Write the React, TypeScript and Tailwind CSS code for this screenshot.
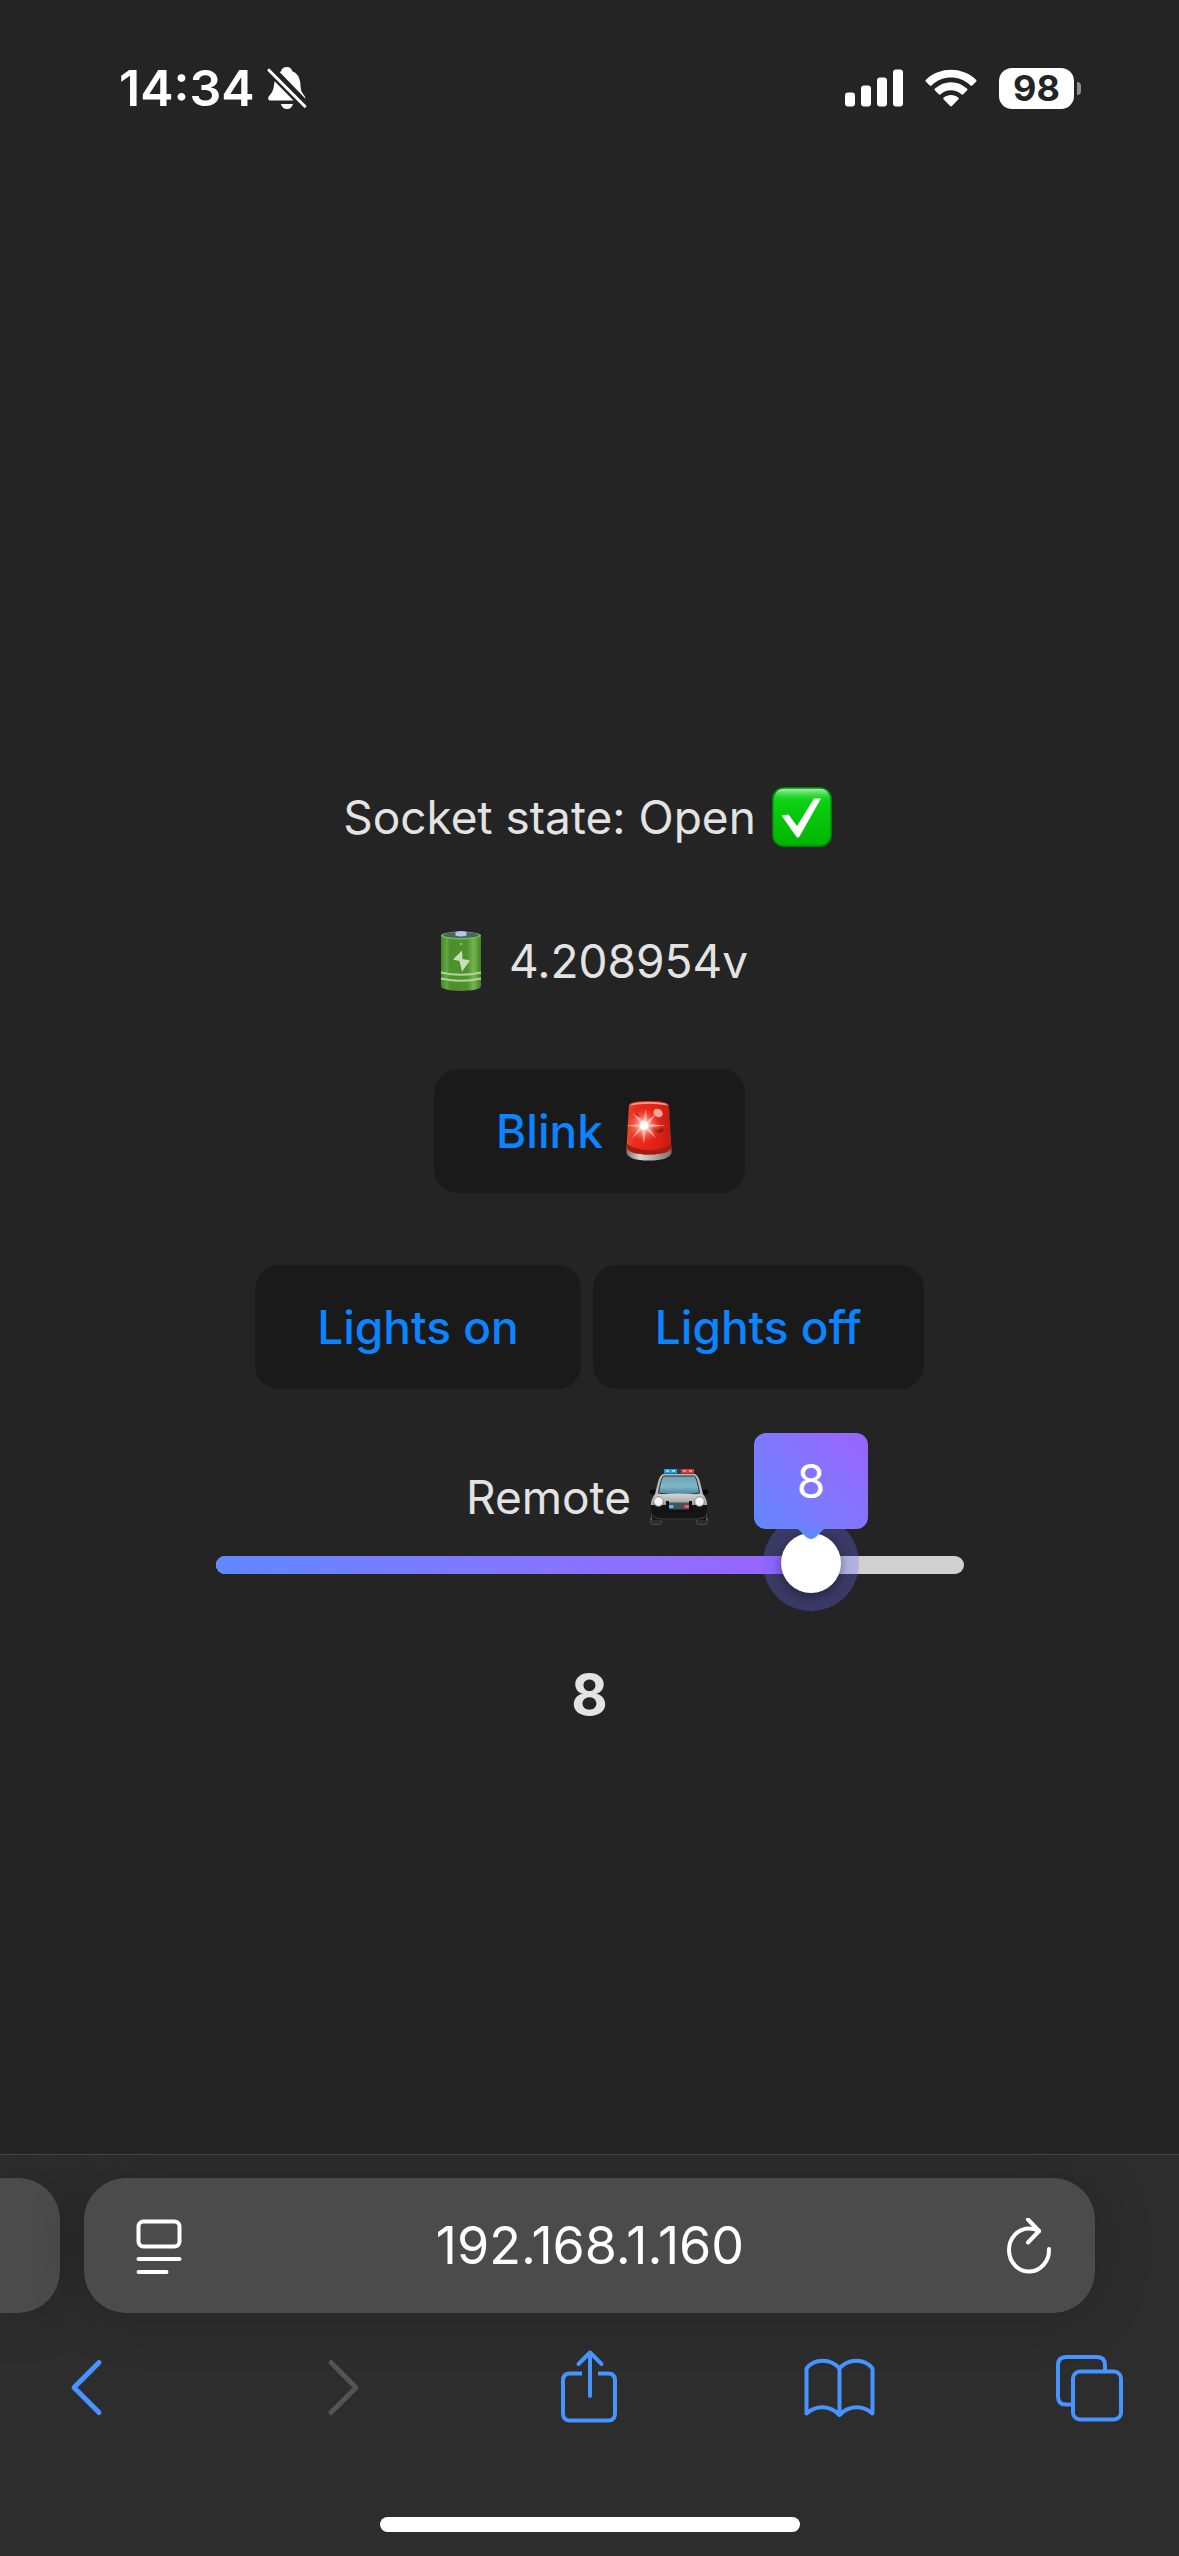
import { useState } from "react";

function BellOff() {
  return (
    <svg className="h-[44px] w-[40px]" viewBox="0 0 40 44" aria-label="Silent mode" role="img">
      <g fill="#fff">
        <path d="M20 1C16.500 1 14.600 3 14.100 5.200L12.600 6L38.500 32.800C38.600 29.500 34.500 28 33.800 22.500L33.200 16.500C32.600 10.500 29.500 6.800 25.300 5.200C24.700 2.900 23 1 20 1Z" />
        <path d="M7.600 15.200L26.500 34.600H3.500C1.200 34.600 0.500 31.900 1.900 30.200C4.200 27.500 6.100 25.300 6.700 21Z" />
        <path d="M13.800 38H26C25.200 41 23 43 20 43C17 43 14.600 41 13.800 38Z" />
      </g>
      <path d="M2 4.200L37.800 40.300" stroke="#fff" strokeWidth="3" strokeLinecap="round" />
    </svg>
  );
}

function Signal() {
  return (
    <svg className="h-[38px] w-[58px]" viewBox="0 0 58 38" fill="#fff" aria-label="Signal" role="img">
      <rect x="0" y="23.500" width="10" height="14" rx="3" />
      <rect x="16" y="16.500" width="10" height="21" rx="3" />
      <rect x="32" y="8.500" width="10" height="29" rx="3" />
      <rect x="48" y="0.500" width="10" height="37" rx="3" />
    </svg>
  );
}

function Wifi() {
  return (
    <svg className="h-[38px] w-[52px]" viewBox="0 0 52 38" fill="#fff" aria-label="Wi-Fi" role="img">
      <path d="M1 10.700Q0 11.700 1 12.700L4.700 16.400Q5.600 17.200 6.500 16.400C17.500 6 34.500 6 45.500 16.400Q46.400 17.200 47.300 16.400L51 12.700Q52 11.700 51 10.700C37 -2.500 15 -2.500 1 10.700Z" />
      <path d="M10 19.600Q9 20.600 10 21.600L13.800 25.300Q14.700 26.200 15.600 25.300C21.600 19.900 30.400 19.900 36.400 25.300Q37.300 26.200 38.200 25.300L42 21.600Q43 20.600 42 19.600C33 11 19 11 10 19.600Z" />
      <path d="M18.700 28.500Q17.700 29.600 18.700 30.600L25.100 37Q26 37.900 26.900 37L33.300 30.600Q34.300 29.600 33.300 28.500C29.100 25.100 22.900 25.100 18.700 28.500Z" />
    </svg>
  );
}

function CheckMark() {
  return (
    <svg className="h-[60px] w-[60px]" viewBox="0 0 60 60" role="img" aria-label="Check mark">
      <defs>
        <linearGradient id="check-face" x1="0" y1="0" x2="0" y2="1">
          <stop offset="0" stopColor="#3fd84a" />
          <stop offset="0.250" stopColor="#0bcf12" />
          <stop offset="1" stopColor="#00b400" />
        </linearGradient>
        <linearGradient id="check-gloss" x1="0" y1="0" x2="0" y2="1">
          <stop offset="0" stopColor="#a8f5ad" stopOpacity="0.900" />
          <stop offset="1" stopColor="#30d838" stopOpacity="0" />
        </linearGradient>
      </defs>
      <rect width="60" height="60" rx="12" fill="#04800a" />
      <rect x="1.500" y="1.500" width="57" height="57" rx="11" fill="url(#check-face)" />
      <rect x="4" y="2" width="52" height="10" rx="7" fill="url(#check-gloss)" />
      <path d="M9.500 28.500L16.500 27.500L25 39L42 11.500H49L27.500 49.500Q25.500 52 23.800 49Z" fill="#fff" />
    </svg>
  );
}

function BatteryCell() {
  return (
    <svg className="h-[60px] w-[60px]" viewBox="0 0 60 60" role="img" aria-label="Battery">
      <defs>
        <linearGradient id="cell-body" x1="0" x2="1">
          <stop offset="0" stopColor="#3f8a22" />
          <stop offset="0.150" stopColor="#67a545" />
          <stop offset="0.220" stopColor="#4d8f2c" />
          <stop offset="0.650" stopColor="#4e922d" />
          <stop offset="0.820" stopColor="#79b352" />
          <stop offset="1" stopColor="#3c8521" />
        </linearGradient>
      </defs>
      <path d="M10 4V55C10 61.500 50 61.500 50 55V4Z" fill="url(#cell-body)" />
      <ellipse cx="30" cy="4.500" rx="20" ry="4" fill="#60c060" />
      <ellipse cx="30" cy="4" rx="18" ry="3" fill="#53605f" />
      <path d="M24.500 1Q30 -1 35.500 1V4.500Q30 6.500 24.500 4.500Z" fill="#b1c7ec" />
      <path d="M10 41.500Q30 46 50 41.500M10 47.500Q30 52 50 47.500" fill="none" stroke="#b2d49b" strokeWidth="2" />
      <path d="M31 19.500L22 28.500L28.500 30L31 40.500L39 29.500L31.500 28Z" fill="#c9dfb8" />
      <circle cx="30" cy="13" r="1.200" fill="#86bd68" />
    </svg>
  );
}

function Siren() {
  return (
    <svg className="h-[60px] w-[68px]" viewBox="0 0 60 60" role="img" aria-label="Siren">
      <defs>
        <linearGradient id="siren-base" x1="0" x2="1">
          <stop offset="0" stopColor="#777572" />
          <stop offset="0.300" stopColor="#d8d5d0" />
          <stop offset="0.650" stopColor="#aaa7a3" />
          <stop offset="1" stopColor="#77726f" />
        </linearGradient>
        <linearGradient id="siren-dome" x1="0" x2="1">
          <stop offset="0" stopColor="#e44b36" />
          <stop offset="0.200" stopColor="#f02b1a" />
          <stop offset="0.750" stopColor="#dc2015" />
          <stop offset="1" stopColor="#b91e16" />
        </linearGradient>
        <radialGradient id="siren-glow">
          <stop offset="0" stopColor="#fff" />
          <stop offset="0.350" stopColor="#ffb2a4" stopOpacity="0.750" />
          <stop offset="1" stopColor="#ff5540" stopOpacity="0" />
        </radialGradient>
      </defs>
      <path d="M7.500 46V52Q10 59.500 30 59.500Q50 59.500 52.500 52V46Z" fill="url(#siren-base)" />
      <path d="M10 4Q12 0 30 0Q48 0 50 4L52.500 47Q49 53.500 30 53.500Q11 53.500 7.500 47Z" fill="url(#siren-dome)" />
      <path d="M8 43Q18 49 30 49Q44 49 52 43L52.500 47Q49 53.500 30 53.500Q11 53.500 7.500 47Z" fill="#a51c12" />
      <path d="M11 4.500Q13 1 30 1Q47 1 49 4.500Q40 2.800 30 2.800Q20 2.800 11 4.500Z" fill="#f4a18f" />
      <ellipse cx="39" cy="12" rx="5" ry="4" fill="#f5a69c" transform="rotate(35 39 12)" />
      <path d="M34 27Q40 33 44 28M17 13L20 16" stroke="#8f1c15" strokeWidth="3" fill="none" />
      <circle cx="25" cy="24.500" r="17" fill="url(#siren-glow)" />
      <path d="M7 24.500L21.500 23L14 12L24 20L27 8L28 20L37 13L30 23L47 24.500L30 26.500L37 37L27 29L25 43L22.500 29L13 37L20.500 26.500Z" fill="#ffd4c8" opacity="0.650" />
      <circle cx="25" cy="24.500" r="4.500" fill="#fff" />
    </svg>
  );
}

function PoliceCar() {
  return (
    <svg className="h-[60px] w-[60px]" viewBox="0 0 60 60" role="img" aria-label="Police car">
      <defs>
        <linearGradient id="car-glass" x1="0" y1="0" x2="0" y2="1">
          <stop offset="0" stopColor="#6fa3b1" />
          <stop offset="0.550" stopColor="#7db8cb" />
          <stop offset="1" stopColor="#477d92" />
        </linearGradient>
        <linearGradient id="car-hood" x1="0" y1="0" x2="0" y2="1">
          <stop offset="0" stopColor="#d6d6d6" />
          <stop offset="1" stopColor="#929292" />
        </linearGradient>
      </defs>
      <rect x="1.500" y="50" width="11" height="7.500" rx="2" fill="#2d2d2d" stroke="#484848" />
      <rect x="47.500" y="50" width="11" height="7.500" rx="2" fill="#2d2d2d" stroke="#484848" />
      <ellipse cx="4" cy="25" rx="3.500" ry="2.500" fill="#080808" />
      <ellipse cx="56" cy="25" rx="3.500" ry="2.500" fill="#080808" />
      <path d="M14 7H46Q49 8 51 15L54 27Q59 33 58 42V53H2V42Q1 33 6 27L9 15Q11 8 14 7Z" fill="#b9b9b9" />
      <path d="M14.500 9H45.500Q48 11 50.500 26Q30 30 9.500 26Q12 11 14.500 9Z" fill="url(#car-glass)" stroke="#263238" />
      <path d="M7 28Q30 25 53 28Q58 34 57 40H3Q2 34 7 28Z" fill="url(#car-hood)" />
      <path d="M1.500 38H58.500L57.500 53H2.500Z" fill="#151515" />
      <path d="M2 46Q3 51.500 12 52H48Q57 51.500 58 46" fill="none" stroke="#424242" />
      <circle cx="9.500" cy="34.500" r="4.800" fill="#f4f4f4" stroke="#888" />
      <circle cx="50.500" cy="34.500" r="4.800" fill="#f4f4f4" stroke="#888" />
      <path d="M17 34H20V42H40V34H43V45H17Z" fill="#111" />
      <rect x="20" y="35.500" width="20" height="7" fill="#4b5055" />
      <rect x="20" y="38" width="4.500" height="3" rx="1" fill="#4ec3ff" />
      <rect x="35.500" y="38" width="4.500" height="3" rx="1" fill="#ff5656" />
      <rect x="14.500" y="2" width="31" height="5" rx="1.500" fill="#263e49" />
      <path d="M15 2H28V6.500H15Z" fill="#2b9dd7" />
      <path d="M32 2H45V6.500H32Z" fill="#dd3c3c" />
      <path d="M17 4H20M23 4H26" stroke="#85dcff" strokeWidth="2" />
      <path d="M34 4H37M40 4H43" stroke="#ff8989" strokeWidth="2" />
    </svg>
  );
}

function PageMenuIcon() {
  return (
    <svg className="h-[56px] w-[46px]" viewBox="0 0 46 56" fill="none" stroke="#fff" strokeWidth="4" strokeLinecap="round">
      <rect x="2.500" y="3.500" width="41" height="25" rx="5" />
      <path d="M2.500 41H43.500M2.500 54H30.500" />
    </svg>
  );
}

function ReloadIcon() {
  return (
    <svg className="h-[56px] w-[46px]" viewBox="0 0 46 56" fill="none" stroke="#fff" strokeWidth="4" strokeLinecap="round" strokeLinejoin="round">
      <path d="M43 31A20 21.500 0 1 1 23 10.500C27 10.500 30 11.500 33 13" />
      <path d="M22 1.500L33 13L22 24.500" />
    </svg>
  );
}

const lineIcon = "h-[76px] w-[68px] overflow-visible";

function BackIcon() {
  return (
    <svg className={lineIcon} viewBox="0 0 68 76" fill="none" stroke="currentColor" strokeWidth="5" strokeLinecap="round" strokeLinejoin="round">
      <path d="M47 11.500L22 36.500L47 61.500" />
    </svg>
  );
}

function ForwardIcon() {
  return (
    <svg className={lineIcon} viewBox="0 0 68 76" fill="none" stroke="currentColor" strokeWidth="5" strokeLinecap="round" strokeLinejoin="round">
      <path d="M28 11.500L53 36.500L28 61.500" />
    </svg>
  );
}

function ShareIcon() {
  return (
    <svg className={lineIcon} viewBox="0 0 68 76" fill="none" stroke="currentColor" strokeWidth="4" strokeLinejoin="round">
      <path d="M28 22.500H16Q9 22.500 9 29.500V62.500Q9 69.500 16 69.500H54Q61 69.500 61 62.500V29.500Q61 22.500 54 22.500H44" />
      <path d="M36 45V1.500M24.500 13L36 1.500L47.500 13" strokeLinecap="round" />
    </svg>
  );
}

function BookIcon() {
  return (
    <svg className={lineIcon} viewBox="0 0 68 76" fill="none" stroke="currentColor" strokeWidth="4" strokeLinecap="round" strokeLinejoin="round">
      <path d="M35.500 17.500C27 7 10 7 2.500 17.500V62.500C12 54 26 54 35.500 64C45 54 59 54 68.500 62.500V17.500C61 7 44 7 35.500 17.500V64" />
    </svg>
  );
}

function TabsIcon() {
  return (
    <svg className={lineIcon} viewBox="0 0 68 76" fill="none" stroke="currentColor" strokeWidth="4">
      <rect x="18" y="20.500" width="48" height="48" rx="7" />
      <path d="M17 53.500H11Q3 53.500 3 45.500V14Q3 6 11 6H42Q50 6 50 14V20" />
    </svg>
  );
}

const actionButton =
  "flex h-[124px] items-center rounded-[24px] bg-[#1a1a1a] px-[62px] font-medium text-[#0a84ff]";

function SpeedSlider({ value, onChange }: { value: number; onChange: (v: number) => void }) {
  const position = `calc(${value * 10}% - 3px)`;
  return (
    <div className="relative flex h-[60px] w-[748px] max-w-full items-center">
      <div className="mt-1 h-[18px] w-full overflow-hidden rounded-full bg-[#d0d0d0]">
        <div
          className="h-full bg-linear-45 from-[#5f88ff] to-[#9b61ff]"
          style={{ width: position }}
        />
      </div>
      <div
        className="pointer-events-none absolute top-1/2 size-[96px] -translate-x-1/2 -translate-y-1/2 rounded-full bg-[#6e6eff]/30"
        style={{ left: position }}
      />
      <div
        className="pointer-events-none absolute top-1/2 size-[60px] -translate-x-1/2 -translate-y-1/2 rounded-full bg-white shadow-[0_3px_12px_rgba(0,0,0,0.4)]"
        style={{ left: position }}
      />
      <output
        htmlFor="remote-speed"
        className="pointer-events-none absolute bottom-[64px] flex h-[96px] w-[114px] -translate-x-1/2 items-center justify-center rounded-[12px] bg-linear-45 from-[#5f88ff] to-[#9b61ff] text-[46px] leading-[72px] text-white"
        style={{ left: position }}
      >
        {value}
        <svg className="absolute top-full left-1/2 h-[10px] w-[26px] -translate-x-1/2" viewBox="0 0 26 10" fill="#5f88ff">
          <path d="M0 0H26L18 8Q13 12 8 8Z" />
        </svg>
      </output>
      <input
        id="remote-speed"
        type="range"
        min={0}
        max={10}
        value={value}
        onChange={(e) => onChange(Number(e.target.value))}
        className="absolute inset-0 h-full w-full cursor-pointer opacity-0"
      />
    </div>
  );
}

export default function App() {
  const [speed, setSpeed] = useState(8);

  return (
    <div className="flex min-h-screen flex-col bg-[#242424] font-['Inter',sans-serif] text-[46px] leading-[72px] text-[#e3e3e3]">
      <header className="flex h-[144px] items-center justify-between pt-[32px] pr-[98px] pl-[119px] text-white">
        <div className="flex items-center gap-[12px]">
          <time className="text-[50px] font-semibold">14:34</time>
          <BellOff />
        </div>
        <div className="flex items-center gap-[22px]">
          <Signal />
          <Wifi />
          <div className="flex items-center gap-[3px]">
            <div className="flex h-[41px] w-[75px] items-center justify-center rounded-[13px] bg-white text-[36px] font-bold text-[#242424]">
              98
            </div>
            <div className="h-[13px] w-[4px] rounded-r-full bg-[#8e8e8e]" />
          </div>
        </div>
      </header>

      <main className="flex flex-1 flex-col items-center justify-center pt-[220px]">
        <p className="flex items-center gap-[16px] pr-1">
          Socket state: Open <CheckMark />
        </p>
        <p className="mt-[72px] flex items-center gap-[18px]">
          <BatteryCell /> 4.208954v
        </p>
        <button type="button" className={`mt-[72px] ${actionButton}`}>
          <span className="flex items-center gap-[12px]">
            Blink <Siren />
          </span>
        </button>
        <div className="mt-[72px] flex gap-[12px]">
          <button type="button" className={actionButton}>Lights on</button>
          <button type="button" className={actionButton}>Lights off</button>
        </div>
        <label htmlFor="remote-speed" className="mt-[72px] flex items-center gap-[18px] pr-1">
          Remote <PoliceCar />
        </label>
        <SpeedSlider value={speed} onChange={setSpeed} />
        <h2 className="mt-[60px] text-[56px] leading-[84px] font-bold">{speed}</h2>
      </main>

      <footer className="overflow-hidden border-t border-[#444444] bg-[#2d2d2d] pt-[23px] pb-[24px]">
        <div className="flex gap-[24px] pr-[84px]">
          <div className="h-[135px] w-[60px] rounded-r-[42px] bg-[#4b4b4b] shadow-[0_0_60px_rgba(0,0,0,0.2)]" />
          <div className="flex h-[135px] min-w-0 flex-1 items-center justify-between rounded-[42px] bg-[#4b4b4b] pr-[43px] pl-[52px] text-white shadow-[0_0_60px_rgba(0,0,0,0.2)]">
            <button type="button" aria-label="Page menu"><PageMenuIcon /></button>
            <input
              type="text"
              aria-label="Address"
              defaultValue="192.168.1.160"
              className="min-w-0 flex-1 bg-transparent pr-2 text-center text-[52px] outline-none"
            />
            <button type="button" aria-label="Reload"><ReloadIcon /></button>
          </div>
        </div>
        <nav className="mt-[38px] flex justify-between pr-[56px] pl-[52px] text-[#4793ff]">
          <button type="button" aria-label="Back"><BackIcon /></button>
          <button type="button" aria-label="Forward" disabled className="text-[#535353]"><ForwardIcon /></button>
          <button type="button" aria-label="Share"><ShareIcon /></button>
          <button type="button" aria-label="Bookmarks"><BookIcon /></button>
          <button type="button" aria-label="Tabs"><TabsIcon /></button>
        </nav>
        <div className="mx-auto mt-[90px] h-[15px] w-[420px] rounded-full bg-white" />
      </footer>
    </div>
  );
}
